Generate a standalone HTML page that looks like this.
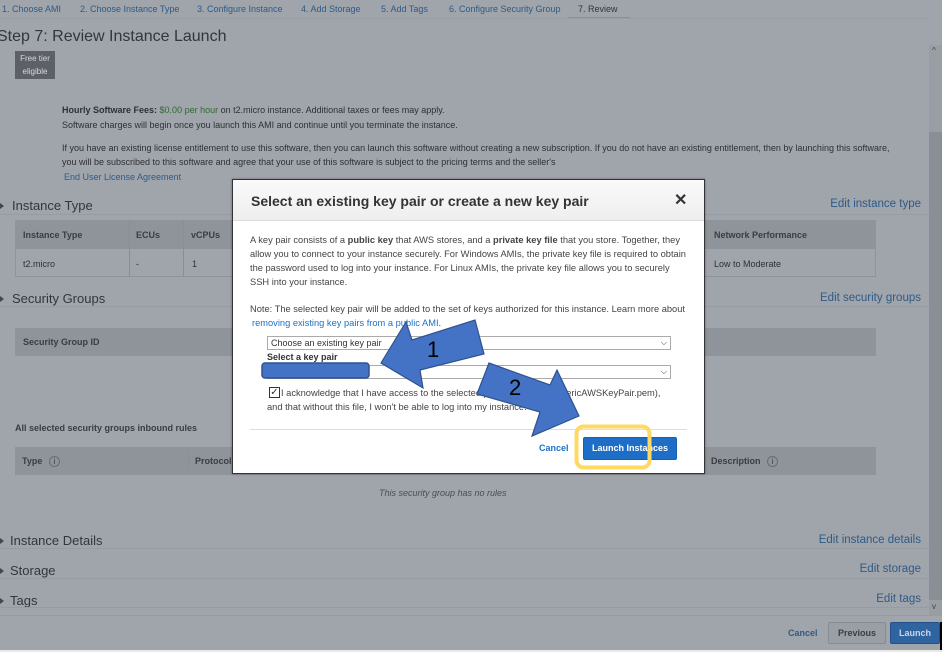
<!DOCTYPE html>
<html><head><meta charset="utf-8"><style>
*{box-sizing:border-box;margin:0;padding:0}
body{width:942px;height:652px;overflow:hidden;background:#a0a4ab;font-family:"Liberation Sans",Arial,sans-serif;position:relative;color:#2e3035}
.a{position:absolute;white-space:nowrap}
.lnk{color:#2f5b86}
.tab{font-size:9px;color:#2f5b86;top:4px}
.sec{font-size:13px;color:#33363b}
.edit{font-size:11.5px;color:#2f5b86;right:21px}
.hr{position:absolute;height:1px;background:#979ba2}
.th{position:absolute;background:#8f939a;font-size:9px;font-weight:bold;color:#3a3d42}
.td{font-size:9px;color:#2e3035}
.tri{position:absolute;width:0;height:0;border-top:3px solid transparent;border-bottom:3px solid transparent;border-left:4px solid #44474c}
.m{font-size:9.3px}
</style></head><body>
<div class="a tab" style="left:2px">1. Choose AMI</div>
<div class="a tab" style="left:80px">2. Choose Instance Type</div>
<div class="a tab" style="left:197px">3. Configure Instance</div>
<div class="a tab" style="left:301px">4. Add Storage</div>
<div class="a tab" style="left:381px">5. Add Tags</div>
<div class="a tab" style="left:449px">6. Configure Security Group</div>
<div class="a tab" style="left:578px;color:#33363b">7. Review</div>
<div style="position:absolute;left:568px;top:17px;width:62px;height:1px;background:#a28d6a"></div>
<div class="hr" style="left:0;top:18px;width:930px;background:#999da4"></div>
<div class="a" style="left:-3px;top:28px;font-size:16px;color:#33363b">Step 7: Review Instance Launch</div>
<div style="position:absolute;left:15px;top:51px;width:40px;height:28px;background:#5d6066;color:#d8d9db;font-size:8px;text-align:center;line-height:13px;padding-top:1px">Free tier<br>eligible</div>
<div class="a" style="left:62px;top:105px;font-size:9px"><b>Hourly Software Fees:</b> <span style="color:#2f6a2f">$0.00 per hour</span> on t2.micro instance. Additional taxes or fees may apply.</div>
<div class="a" style="left:62px;top:120px;font-size:9px">Software charges will begin once you launch this AMI and continue until you terminate the instance.</div>
<div class="a" style="left:62px;top:143px;font-size:9px">If you have an existing license entitlement to use this software, then you can launch this software without creating a new subscription. If you do not have an existing entitlement, then by launching this software,</div>
<div class="a" style="left:62px;top:157px;font-size:9px">you will be subscribed to this software and agree that your use of this software is subject to the pricing terms and the seller's</div>
<div class="a lnk" style="left:64px;top:172px;font-size:9px">End User License Agreement</div>

<div class="tri" style="left:0;top:203px"></div>
<div class="a sec" style="left:12px;top:198px">Instance Type</div>
<div class="a edit" style="top:198px">Edit instance type</div>
<div class="hr" style="left:0;top:214px;width:929px"></div>
<div class="th" style="left:15px;top:220px;width:861px;height:29px"></div>
<div style="position:absolute;left:15px;top:249px;width:861px;height:28px;border:1px solid #8f939a;border-top:none"></div>
<div style="position:absolute;left:129px;top:220px;width:1px;height:57px;background:#8a8e95"></div>
<div style="position:absolute;left:183px;top:220px;width:1px;height:57px;background:#8a8e95"></div>
<div class="a th" style="background:none;left:23px;top:230px">Instance Type</div>
<div class="a th" style="background:none;left:136px;top:230px">ECUs</div>
<div class="a th" style="background:none;left:191px;top:230px">vCPUs</div>
<div class="a th" style="background:none;left:714px;top:230px">Network Performance</div>
<div class="a td" style="left:23px;top:259px">t2.micro</div>
<div class="a td" style="left:136px;top:259px">-</div>
<div class="a td" style="left:192px;top:259px">1</div>
<div class="a td" style="left:714px;top:259px">Low to Moderate</div>

<div class="tri" style="left:0;top:296px"></div>
<div class="a sec" style="left:12px;top:291px">Security Groups</div>
<div class="a edit" style="top:292px">Edit security groups</div>
<div class="hr" style="left:0;top:306px;width:929px"></div>
<div class="th" style="left:15px;top:328px;width:861px;height:28px"></div>
<div class="a th" style="background:none;left:23px;top:337px">Security Group ID</div>
<div class="a th" style="background:none;left:15px;top:423px;font-size:9px">All selected security groups inbound rules</div>
<div class="th" style="left:15px;top:447px;width:861px;height:28px"></div>
<div style="position:absolute;left:188px;top:453px;width:1px;height:16px;background:#8a8e95"></div>
<div class="a th" style="background:none;left:22px;top:456px">Type <span style="display:inline-block;width:11px;height:11px;border:1px solid #6a6d72;border-radius:50%;font-size:8px;text-align:center;line-height:9px;font-weight:normal;margin-left:4px">i</span></div>
<div class="a th" style="background:none;left:195px;top:456px">Protocol</div>
<div class="a th" style="background:none;left:711px;top:456px">Description <span style="display:inline-block;width:11px;height:11px;border:1px solid #6a6d72;border-radius:50%;font-size:8px;text-align:center;line-height:9px;font-weight:normal;margin-left:4px">i</span></div>
<div class="a" style="left:379px;top:488px;font-size:9px;font-style:italic;color:#4a4d52">This security group has no rules</div>

<div class="tri" style="left:0;top:538px"></div>
<div class="a sec" style="left:10px;top:533px">Instance Details</div>
<div class="a edit" style="top:534px">Edit instance details</div>
<div class="hr" style="left:0;top:548px;width:929px"></div>
<div class="tri" style="left:0;top:568px"></div>
<div class="a sec" style="left:10px;top:563px">Storage</div>
<div class="a edit" style="top:563px">Edit storage</div>
<div class="hr" style="left:0;top:578px;width:929px"></div>
<div class="tri" style="left:0;top:598px"></div>
<div class="a sec" style="left:10px;top:593px">Tags</div>
<div class="a edit" style="top:593px">Edit tags</div>
<div class="hr" style="left:0;top:607px;width:929px"></div>
<div class="hr" style="left:0;top:615px;width:942px"></div>

<div style="position:absolute;left:929px;top:45px;width:13px;height:570px;background:#999da4"></div>
<div style="position:absolute;left:929px;top:132px;width:13px;height:468px;background:#8a8e95"></div>
<div class="a" style="left:932px;top:46px;font-size:8px;color:#444">^</div>
<div class="a" style="left:932px;top:602px;font-size:8px;color:#444">v</div>

<div class="a" style="left:788px;top:628px;font-size:9px;font-weight:bold;color:#2f5b86">Cancel</div>
<div style="position:absolute;left:828px;top:622px;width:58px;height:22px;background:#9a9ea5;border:1px solid #878b92;border-radius:2px;font-size:9px;font-weight:bold;color:#3a3d42;text-align:center;line-height:20px">Previous</div>
<div style="position:absolute;left:890px;top:622px;width:50px;height:22px;background:#2f64a0;border:1px solid #24508a;border-radius:2px;font-size:9px;font-weight:bold;color:#c9d6e6;text-align:center;line-height:20px">Launch</div>
<div style="position:absolute;left:940px;top:622px;width:2px;height:30px;background:#000"></div>
<div style="position:absolute;left:0;top:650px;width:942px;height:2px;background:#e8e8e8"></div>

<div style="position:absolute;left:232px;top:179px;width:473px;height:295px;background:#fff;border:1px solid #333;box-shadow:0 0 2px rgba(0,0,0,.4)">
 <div style="height:41px;background:linear-gradient(#fafafa,#eeeeee);border-bottom:1px solid #ddd;position:relative">
  <div class="a" style="left:18px;top:13px;font-size:14px;font-weight:bold;color:#333">Select an existing key pair or create a new key pair</div>
  <div class="a" style="left:441px;top:10px;font-size:16px;font-weight:bold;color:#333">✕</div>
 </div>
 <div class="a m" style="left:17px;top:53px;line-height:14px;color:#444">A key pair consists of a <b>public key</b> that AWS stores, and a <b>private key file</b> that you store. Together, they<br>allow you to connect to your instance securely. For Windows AMIs, the private key file is required to obtain<br>the password used to log into your instance. For Linux AMIs, the private key file allows you to securely<br>SSH into your instance.</div>
 <div class="a m" style="left:17px;top:124px;color:#444">Note: The selected key pair will be added to the set of keys authorized for this instance. Learn more about</div>
 <div class="a m" style="left:19px;top:138px;color:#1a73c8">removing existing key pairs from a public AMI<span style="color:#444">.</span></div>
 <div style="position:absolute;left:34px;top:156px;width:404px;height:14px;border:1px solid #aaa;font-size:9px;color:#333;padding-left:3px;line-height:12px">Choose an existing key pair<span style="position:absolute;right:3px;top:0;font-size:8px">⌵</span></div>
 <div class="a" style="left:34px;top:172px;font-size:9px;font-weight:bold;color:#333">Select a key pair</div>
 <div style="position:absolute;left:34px;top:185px;width:404px;height:14px;border:1px solid #aaa;line-height:12px"><span style="position:absolute;right:3px;top:0;font-size:8px">⌵</span></div>
 <div style="position:absolute;left:36px;top:207px;width:11px;height:11px;border:1px solid #333;font-size:10px;line-height:9px;text-align:center">✓</div>
 <div class="a m" style="left:48px;top:208px;color:#444">I acknowledge that I have access to the selected private key file (GenericAWSKeyPair.pem),</div>
 <div class="a m" style="left:34px;top:222px;color:#444">and that without this file, I won't be able to log into my instance.</div>
 <div style="position:absolute;left:17px;top:249px;width:437px;height:1px;background:#ddd"></div>
 <div class="a" style="left:306px;top:263px;font-size:9px;font-weight:bold;color:#1a73c8">Cancel</div>
 <div style="position:absolute;left:350px;top:257px;width:94px;height:23px;background:#1e6ec8;border:1px solid #185fad;border-radius:2px;color:#fff;font-size:9px;font-weight:bold;text-align:center;line-height:21px">Launch Instances</div>
</div>

<svg width="942" height="652" style="position:absolute;left:0;top:0">
 <rect x="262" y="363" width="107" height="15" rx="3" fill="#4472c4" stroke="#2f528f" stroke-width="1.5"/>
 <polygon points="381,363 406,322 412,340 475,320 484,354 420,370 423,388" fill="#4472c4" stroke="#2f528f" stroke-width="1.2"/>
 <polygon points="489,363 550,385 557,370 579,416 532,436 540,412 477,394" fill="#4472c4" stroke="#2f528f" stroke-width="1.2"/>
 <text x="427" y="357" font-family="Liberation Sans,sans-serif" font-size="22" fill="#000">1</text>
 <text x="509" y="395" font-family="Liberation Sans,sans-serif" font-size="22" fill="#000">2</text>
 <rect x="576.5" y="426.5" width="73" height="41" rx="7" fill="none" stroke="#ffd966" stroke-width="4"/>
</svg>
</body></html>
